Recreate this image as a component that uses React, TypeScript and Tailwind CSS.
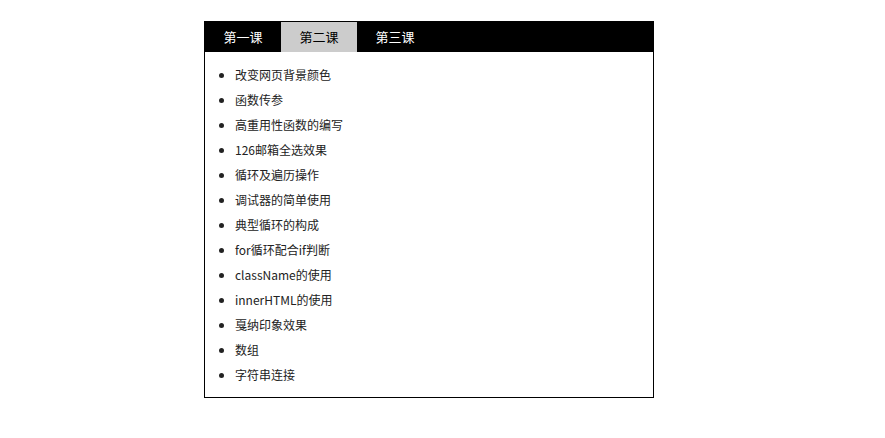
const tabs = ['第一课', '第二课', '第三课'];

const lessons = [
  '改变网页背景颜色',
  '函数传参',
  '高重用性函数的编写',
  '126邮箱全选效果',
  '循环及遍历操作',
  '调试器的简单使用',
  '典型循环的构成',
  'for循环配合if判断',
  'className的使用',
  'innerHTML的使用',
  '戛纳印象效果',
  '数组',
  '字符串连接',
];

export default function App() {
  return (
    <div className="min-h-[438px] bg-white pt-[21px] pl-[204px] font-['Noto_Sans_CJK_SC','Noto_Sans',sans-serif] text-[12px] text-[#222]">
      <div className="w-[450px] border border-black">
        {/* tabs */}
        <div className="flex h-[30px] bg-black">
          {tabs.map((t, i) => (
            <div
              key={t}
              className={
                i === 1
                  ? 'flex w-[76px] items-center justify-center bg-[#cccccc] text-[13px] text-black'
                  : 'flex w-[76px] items-center justify-center text-[13px] text-white'
              }
            >
              {t}
            </div>
          ))}
        </div>

        {/* lesson list */}
        <ul className="list-disc pt-[10px] pb-[10px] pl-[30px]">
          {lessons.map((l) => (
            <li key={l} className="h-[25px] leading-[25px]">
              {l}
            </li>
          ))}
        </ul>
      </div>
    </div>
  );
}
